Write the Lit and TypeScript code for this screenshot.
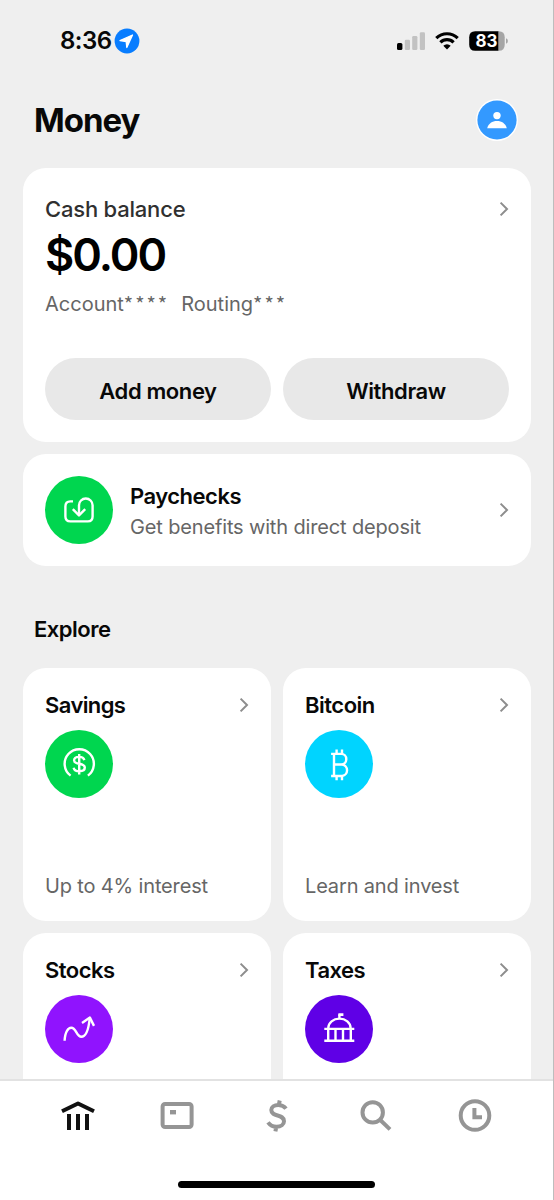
import { LitElement, html, css, svg } from "lit";
import { customElement, property } from "lit/decorators.js";

const glyphs: Record<string, unknown> = {
  paychecks: svg`<path d="M28 25.4H25.4Q20.4 25.4 20.4 30.4V40.6Q20.4 45.4 25.4 45.4H42.8Q47.6 45.4 47.6 40.6V29.3A6.8 6.8 0 0 0 34 29.3V38.6"/><path d="M27.8 33.2L34 39.4L40.2 33.2"/>`,
  savings: svg`<path d="M25.6 45.6A14.6 14.6 0 1 1 42.9 45.6"/><path d="M39.4 30.2C38.7 27.9 36.8 26.9 34.2 26.9C31.2 26.9 29.1 28.2 29.1 30.4C29.1 35.2 39.8 32.2 39.8 37.6C39.8 40.2 37.4 41.3 34.3 41.3C31.2 41.3 29.2 40.1 28.6 37.7M34.2 24V44.4"/>`,
  bitcoin: svg`<path d="M26.1 23.9H36.2A5 5.2 0 0 1 36.2 34.5H29H37.2A5.6 5.8 0 0 1 37.2 46H26.1M29 23.9V46M31.6 19.4V23.9M37 19.4V24M31.6 46V50.2M37 46V50.2"/>`,
  stocks: svg`<path d="M19.6 45.8C20 36.5 23.3 32.8 26.3 32.8C31.3 32.8 31.5 41.8 36.3 41.8C41 41.8 43.6 34.5 44.7 23.4"/><path d="M37 28L44.9 22.6L49 30.9"/>`,
  taxes: svg`<path d="M19.3 33.9H49.3M19.3 45.8H49.3M23.2 33.9V45.8M30.5 33.9V45.8M38 33.9V45.8M45.8 33.9V45.8M23.3 33A11 9.2 0 0 1 45.6 33M34.4 23V19.2"/><path d="M33.4 18.3H38.4V20.9H33.4Z" fill="#fff" stroke="none"/>`,
};

@customElement("round-icon")
class RoundIcon extends LitElement {
  @property() name = "";
  @property() tone = "";
  static styles = css`
    :host { display: block; width: 68px; height: 68px; flex: none; }
    .disc { display: block; border-radius: 50%; fill: none; stroke: #fff; stroke-width: 2.4; stroke-linejoin: round; }
    .green { background: #00d64f; }
    .cyan { background: #00d4ff; }
    .violet { background: #9013fe; }
    .indigo { background: #5f00e6; }
  `;
  render() {
    return html`<svg class="disc ${this.tone}" width="68" height="68" viewBox="0 0 68 68">${glyphs[this.name]}</svg>`;
  }
}

@customElement("chevron-icon")
class ChevronIcon extends LitElement {
  static styles = css`
    :host { display: block; width: 10px; height: 16px; flex: none; }
    .chev { display: block; fill: none; stroke: #8d8d8d; stroke-width: 2; }
  `;
  render() {
    return html`<svg class="chev" width="10" height="16" viewBox="0 0 10 16"><path d="M1.6 1.6L8 8L1.6 14.4"/></svg>`;
  }
}

@customElement("explore-tile")
class ExploreTile extends LitElement {
  @property() label = "";
  @property() note = "";
  @property() icon = "";
  @property() tone = "";
  static styles = css`
    :host { display: flex; flex-direction: column; box-sizing: border-box; height: 253px; padding: 22px 22px 20px; border-radius: 23px; background: #fff; }
    .top { display: flex; justify-content: space-between; align-items: center; height: 30px; margin-bottom: 9.5px; }
    .label { font-size: 22px; font-weight: 600; line-height: 30px; letter-spacing: -0.5px; color: #080808; }
    .label.Savings { letter-spacing: -0.6px; }
    .note { margin-top: auto; font-size: 20px; line-height: 30px; letter-spacing: -0.15px; color: #666; }
  `;
  render() {
    return html`
      <div class="top"><span class="label ${this.label}">${this.label}</span><chevron-icon></chevron-icon></div>
      <round-icon name=${this.icon} tone=${this.tone}></round-icon>
      <div class="note">${this.note}</div>
    `;
  }
}

@customElement("app-root")
class AppRoot extends LitElement {
  static styles = css`
    :host { display: flex; flex-direction: column; box-sizing: border-box; width: 554px; height: 1200px; overflow: hidden; background: #efefef; border-right: 1px solid #bdbdbd; font-family: Inter, "Liberation Sans", sans-serif; color: #080808; }
    svg { display: block; }
    .status { display: flex; align-items: center; justify-content: space-between; height: 82px; padding: 0 45px 0 60px; }
    .clock { display: flex; align-items: center; gap: 3px; font-size: 24px; font-weight: 600; letter-spacing: -0.55px; line-height: 30px; }
    .signals { display: flex; align-items: center; }
    .digits { font-size: 17px; font-weight: 700; fill: #fff; letter-spacing: 0; }
    .header { display: flex; align-items: center; justify-content: space-between; height: 86px; box-sizing: border-box; padding: 0 13px 10px 34px; }
    .title { margin: 0; font-size: 33px; line-height: 42px; font-weight: 700; letter-spacing: -1px; }
    .scroll { flex: 1; min-height: 0; overflow: hidden; display: flex; flex-direction: column; padding: 0 22px 0 23px; }
    .header { margin-right: 22px; }
    .card { box-sizing: border-box; border-radius: 23px; background: #fff; flex: none; }
    .balance { height: 274px; padding: 26px 22px 22px; margin-bottom: 12px; display: flex; flex-direction: column; }
    .row { display: flex; align-items: center; justify-content: space-between; height: 30px; }
    .name { font-size: 22px; font-weight: 500; letter-spacing: -0.2px; color: #303030; }
    .amount { font-size: 45px; font-weight: 600; line-height: 56px; letter-spacing: -2px; margin-top: 3px; color: #000; }
    .numbers { display: flex; gap: 12px; font-size: 20px; line-height: 30px; margin-top: 6px; color: #666; }
    .pair { display: flex; }
    .stars { font-family: "Noto Sans CJK SC", Inter, sans-serif; letter-spacing: 2px; }
    .actions { display: grid; grid-template-columns: 1fr 1fr; gap: 12px; margin-top: auto; }
    .pill { height: 62px; border: 0; border-radius: 31px; background: #e8e8e8; font: 600 22px/62px Inter, sans-serif; letter-spacing: -0.4px; color: #080808; padding: 2px 0 0; }
    .pay { height: 112px; display: flex; align-items: center; padding: 0 22px; }
    .paytext { flex: 1; padding-left: 17px; padding-top: 3px; }
    .payname { font-size: 22px; font-weight: 600; line-height: 31px; letter-spacing: -0.5px; }
    .paynote { font-size: 20px; line-height: 31px; color: #666; letter-spacing: -0.15px; }
    .section { flex: none; height: 102px; box-sizing: border-box; padding: 48px 0 0 11px; margin: 0; font-size: 22px; line-height: 30px; font-weight: 600; letter-spacing: -0.5px; }
    .grid { display: grid; grid-template-columns: 1fr 1fr; gap: 12px; flex: none; }
    .nav { flex: none; height: 121px; box-sizing: border-box; border-top: 2px solid #e2e2e2; background: #fff; display: flex; flex-direction: column; justify-content: space-between; align-items: center; padding: 15px 28px 12px; }
    .tabs { display: flex; width: 100%; }
    .tab { flex: 1; display: flex; justify-content: center; fill: none; stroke: #959595; stroke-width: 4; }
    .tab.active { stroke: #111; }
    .home { width: 197px; height: 7px; border-radius: 4px; background: #000; }
  `;
  render() {
    return html`
      <div class="status">
        <div class="clock"><span>8:36</span>
          <svg width="26" height="26" viewBox="0 0 26 26"><circle cx="13" cy="13" r="12.4" fill="#087dff"/><path d="M6 12.6L18.5 7L12.8 19.5L12.2 13.6Z" fill="#fff" stroke="#fff" stroke-width="1.3" stroke-linejoin="round"/></svg>
        </div>
        <div class="signals">
          <svg width="111" height="24" viewBox="397 29 111 24">
            <rect x="397" y="43" width="5.4" height="7" rx="1.5"/>
            <g fill="#c2c2c2"><rect x="404.8" y="39.8" width="5.2" height="10.2" rx="1.3"/><rect x="412.2" y="36" width="5.2" height="14" rx="1.3"/><rect x="419.8" y="32.3" width="5.2" height="17.7" rx="1.3"/></g>
            <g fill="none" stroke="#000" stroke-width="3.2"><path d="M436.3 38.1A15.3 15.3 0 0 1 457.7 38.1"/><path d="M440.4 42.4A9.4 9.4 0 0 1 453.6 42.4"/></g>
            <path d="M447 49.4L443.3 45.7A5.3 5.3 0 0 1 450.7 45.7Z"/>
            <path d="M475.2 31.2H498.6V50.8H475.2Q469.2 50.8 469.2 44.8V37.2Q469.2 31.2 475.2 31.2Z"/>
            <path d="M498.6 31.2H498.9Q504.7 31.2 504.7 37.2V44.8Q504.7 50.8 498.9 50.8H498.6Z" fill="#a5a5a5"/>
            <path d="M506 38.3Q507.9 39 507.9 41T506 43.7Z" fill="#a5a5a5"/>
            <text class="digits" x="475.5" y="47.2" textLength="22" lengthAdjust="spacingAndGlyphs">83</text>
          </svg>
        </div>
      </div>
      <div class="header">
        <h1 class="title">Money</h1>
        <svg width="42" height="42" viewBox="0 0 42 42"><circle cx="21" cy="21" r="21" fill="#fff"/><circle cx="21" cy="21" r="19.6" fill="#3399ff"/><circle cx="21" cy="16.6" r="3.7" fill="#fff"/><path d="M11.2 29.2C12.4 24.7 16.3 22.1 21 22.1S29.6 24.7 30.8 29.2Z" fill="#fff"/></svg>
      </div>
      <div class="scroll">
        <div class="card balance">
          <div class="row"><span class="name">Cash balance</span><chevron-icon></chevron-icon></div>
          <div class="amount">$0.00</div>
          <div class="numbers"><span class="pair">Account<span class="stars">****</span></span><span class="pair">Routing<span class="stars">***</span></span></div>
          <div class="actions"><button class="pill">Add money</button><button class="pill">Withdraw</button></div>
        </div>
        <div class="card pay">
          <round-icon name="paychecks" tone="green"></round-icon>
          <div class="paytext"><div class="payname">Paychecks</div><div class="paynote">Get benefits with direct deposit</div></div>
          <chevron-icon></chevron-icon>
        </div>
        <h2 class="section">Explore</h2>
        <div class="grid">
          <explore-tile label="Savings" note="Up to 4% interest" icon="savings" tone="green"></explore-tile>
          <explore-tile label="Bitcoin" note="Learn and invest" icon="bitcoin" tone="cyan"></explore-tile>
          <explore-tile label="Stocks" icon="stocks" tone="violet"></explore-tile>
          <explore-tile label="Taxes" icon="taxes" tone="indigo"></explore-tile>
        </div>
      </div>
      <div class="nav">
        <div class="tabs">
          <div class="tab active"><svg width="40" height="40" viewBox="0 0 40 40"><path d="M4 15.3L20 7.5L36 15.3" stroke-linejoin="round"/><path d="M11 18V34M20 18V34M29 18V34"/></svg></div>
          <div class="tab"><svg width="40" height="40" viewBox="0 0 40 40"><rect x="5.6" y="8" width="29" height="23" rx="2.5"/><rect x="13" y="14" width="6" height="4.4" fill="#959595" stroke="none"/></svg></div>
          <div class="tab"><svg width="40" height="40" viewBox="0 0 40 40"><path d="M29 12.6C27.2 10.2 24.6 8.9 21.4 8.9C17.3 8.9 14.3 11 14.3 14C14.3 21.5 27 17.5 27 25.2C27 28.5 23.9 30.8 19.5 30.8C15.8 30.8 13 29.2 11 26.4M22.7 4.5L21.8 9M19.3 31L18.4 35.3"/></svg></div>
          <div class="tab"><svg width="40" height="40" viewBox="0 0 40 40"><circle cx="16.7" cy="16.4" r="10.2"/><path d="M24 23.7L34 33.4"/></svg></div>
          <div class="tab"><svg width="40" height="40" viewBox="0 0 40 40"><circle cx="20" cy="19.5" r="14.3"/><path d="M19.4 12V21.2H27"/></svg></div>
        </div>
        <div class="home"></div>
      </div>
    `;
  }
}
